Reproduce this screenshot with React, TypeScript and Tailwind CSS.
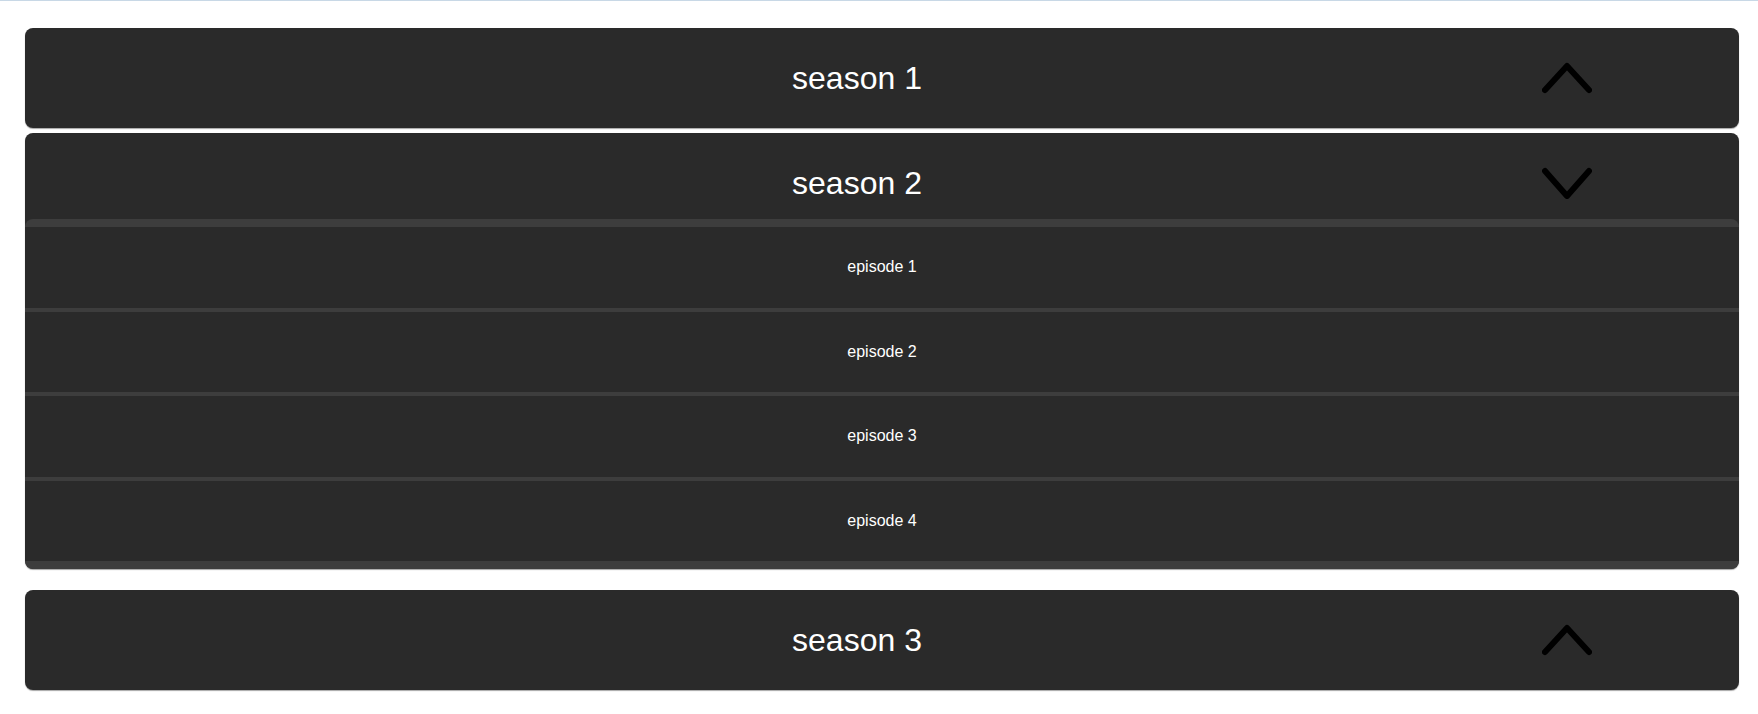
import { useState } from "react";

const seasons = [
  { id: 1, name: "season 1", episodes: ["episode 1", "episode 2", "episode 3", "episode 4"] },
  { id: 2, name: "season 2", episodes: ["episode 1", "episode 2", "episode 3", "episode 4"] },
  { id: 3, name: "season 3", episodes: ["episode 1", "episode 2", "episode 3", "episode 4"] },
];

function Chevron({ open }: { open: boolean }) {
  return (
    <svg width="50" height="32" viewBox="0 0 50 32" className="shrink-0" aria-hidden="true">
      <polyline
        points={open ? "3,4 25,29 47,4" : "3,28 25,4 47,28"}
        fill="none"
        stroke="#000"
        strokeWidth="6"
        strokeLinecap="round"
        strokeLinejoin="round"
      />
    </svg>
  );
}

export default function App() {
  const [openId, setOpenId] = useState<number | null>(2);

  return (
    <div className="min-h-screen bg-white border-t border-[#c8d8e6] pt-[27px] pl-[25px] pr-[19px] font-['Liberation_Sans',Arial,sans-serif]">
      {seasons.map((s, i) => {
        const isOpen = openId === s.id;
        const prevOpen = i > 0 && openId === seasons[i - 1].id;
        return (
          <div
            key={s.id}
            className={`rounded-lg overflow-hidden bg-[#2a2a2a] shadow-[0_1px_1px_rgba(0,0,0,0.35)] ${
              i === 0 ? "" : prevOpen ? "mt-[21px]" : "mt-[5px]"
            }`}
          >
            <button
              onClick={() => setOpenId(isOpen ? null : s.id)}
              className={`w-full flex items-center pl-[147px] pr-[147px] text-white cursor-pointer ${
                isOpen ? "h-[86px] pt-[14px]" : "h-[100px]"
              }`}
            >
              <span className="flex-1 text-center text-[32px] leading-none">{s.name}</span>
              <Chevron open={isOpen} />
            </button>
            {isOpen && (
              <div className="bg-[#3d3d3d] rounded-lg py-[8px] flex flex-col gap-[4px]">
                {s.episodes.map((ep) => (
                  <div
                    key={ep}
                    className="h-[80.5px] bg-[#2a2a2a] flex items-center justify-center text-white text-[16px]"
                  >
                    {ep}
                  </div>
                ))}
              </div>
            )}
          </div>
        );
      })}
    </div>
  );
}
